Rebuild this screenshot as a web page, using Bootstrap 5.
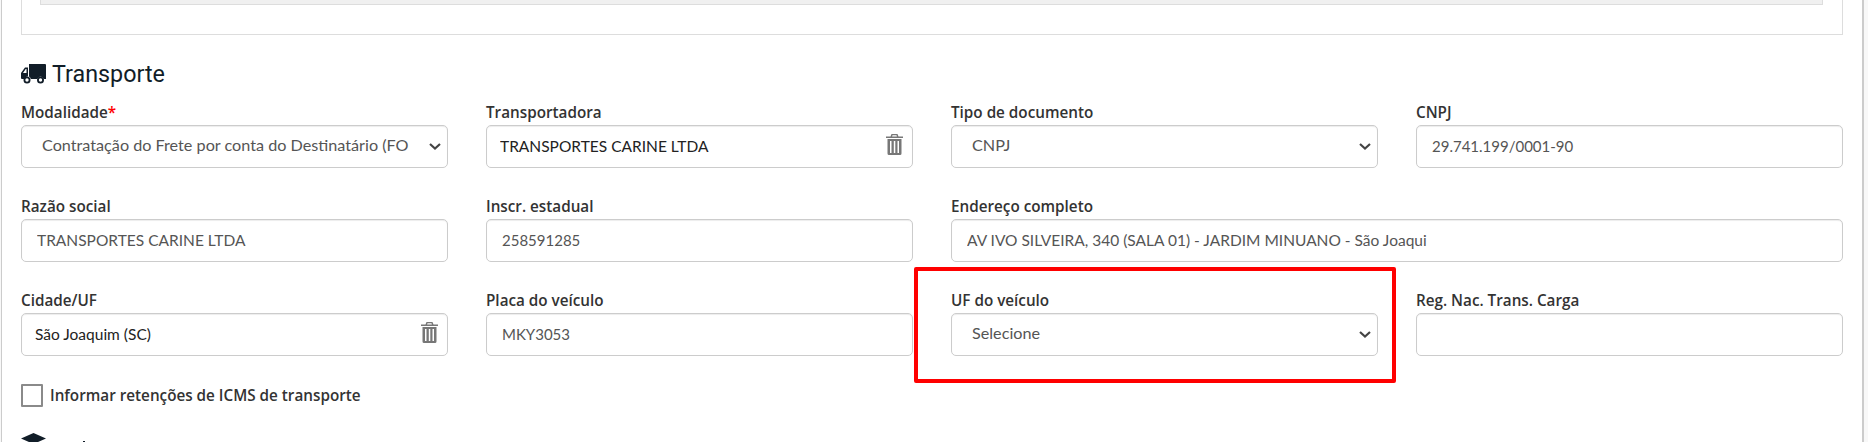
<!DOCTYPE html>
<html lang="pt-BR">
  <head>
    <title>Transporte</title>
    <link href="https://cdn.jsdelivr.net/npm/bootstrap@5.3.2/dist/css/bootstrap.min.css" rel="stylesheet" />
    <script src="https://cdn.jsdelivr.net/npm/bootstrap@5.3.2/dist/js/bootstrap.bundle.min.js"></script>
<style>
  html, body{
    height: 442px;
    overflow: hidden;
  }
  body{
    background: #f8f8f8;
    font-family: "Lato", "Liberation Sans", sans-serif;
    color: #333;
  }
  .page-frame{
    margin: 0 4px 0 1px;
    height: 442px;
    overflow: hidden;
    background: #fff;
    border-left: 1px solid #ccc;
    border-right: 2px solid #ccc;
    padding: 0 19px;
  }
  .prev-box{
    height: 35px;
    border: 1px solid #ddd;
    border-top: 0;
    padding: 0 19px 0 18px;
  }
  .prev-fill{
    height: 5px;
    background: #f0f0f0;
    border: 1px solid #ddd;
    border-top: 0;
  }
  .sec-title{
    display: flex;
    align-items: center;
    gap: 6px;
    font-family: "Roboto", sans-serif;
    font-size: 23.3px;
    font-weight: 400;
    line-height: 28px;
    color: #111d28;
    margin: 25px 0 14px;
  }
  .sec-title svg{
    flex: none;
  }
  .form-rows{
    --bs-gutter-x: 38px;
    --bs-gutter-y: 0;
  }
  .field-row{
    height: 94px;
  }
  .field-label{
    display: block;
    font-family: "Open Sans", sans-serif;
    font-size: 15.25px;
    font-weight: 600;
    line-height: 20px;
    margin-bottom: 3px;
    color: #333;
  }
  .req{
    color: #f00;
  }
  .form-control.fld, .form-select.fld{
    height: 43px;
    font-size: 15.5px;
    color: #555;
    border: 1px solid #ccc;
    border-radius: 5px;
    box-shadow: inset 0 1px 1px rgba(0,0,0,.075);
  }
  .form-control.fld{
    padding: 0 14px 2px 15px;
  }
  .form-select.fld{
    font-size: 16.2px;
    padding: 0 38px 2px 20px;
    background-image: url("data:image/svg+xml,%3csvg xmlns='http://www.w3.org/2000/svg' viewBox='0 0 12 7'%3e%3cpath fill='none' stroke='%23444' stroke-width='2.200' d='M1 1l5 4.500L11 1'/%3e%3c/svg%3e");
    background-position: right 6px center;
    background-size: 12px 7px;
  }
  .form-control.dark-val{
    color: #222;
    padding-left: 13px;
  }
  .form-control.num-val{
    font-size: 15px;
  }
  .fld-wrap{
    position: relative;
  }
  .trash-ic{
    position: absolute;
    top: 9px;
    right: 10px;
  }
  .mark-box{
    position: absolute;
    top: -23px;
    left: -18px;
    width: 482px;
    height: 116px;
    border: 4px solid #f00;
    border-radius: 2px;
    pointer-events: none;
  }
  .mark-host{
    position: relative;
  }
  .check-line{
    display: flex;
    align-items: center;
    gap: 7px;
    height: 23px;
  }
  .check-square{
    appearance: none;
    width: 22px;
    height: 23px;
    border: 2px solid #8a8a8a;
    border-radius: 1px;
    background: #fff;
    flex: none;
    margin: 0;
  }
  .check-text{
    font-family: "Open Sans", sans-serif;
    font-size: 15.25px;
    font-weight: 600;
    color: #333;
    margin: 0;
  }
  .next-title{
    align-items: flex-start;
    margin-top: 26px;
  }
  .next-dot{
    width: 2px;
    height: 2px;
    margin: 8px 0 0 31px;
    background: #111d28;
  }
</style>
  </head>
  <body>
    <div class="page-frame">
      <div class="prev-box"><div class="prev-fill"></div></div>

      <h4 class="sec-title">
        <svg width="25" height="20" viewBox="0 0 25 20"><path fill="#111d28" d="M8 0h16a1 1 0 0 1 1 1v14h-2.200a3.400 3.400 0 0 0-6.600 0H9.800a3.400 3.400 0 0 0-1.800-2.400V0zM7 3.500v9a3.400 3.400 0 0 0-3.800 2.500H1a1 1 0 0 1-1-1V9l4-5.500h3zM5.500 5h-.8L2 9h3.500V5z"/><circle cx="6" cy="16" r="2.600" fill="none" stroke="#111d28" stroke-width="1.800"/><circle cx="19.500" cy="16" r="2.600" fill="none" stroke="#111d28" stroke-width="1.800"/></svg>
        <span>Transporte</span>
      </h4>

      <div class="row form-rows field-row">
        <div class="col-3">
          <label class="field-label">Modalidade<span class="req">*</span></label>
          <select class="form-select fld"><option>Contratação do Frete por conta do Destinatário (FOB)</option></select>
        </div>
        <div class="col-3">
          <label class="field-label">Transportadora</label>
          <div class="fld-wrap">
            <input class="form-control fld dark-val" value="TRANSPORTES CARINE LTDA">
            <svg class="trash-ic" width="17" height="21" viewBox="0 0 17 21"><path fill="#777" d="M5.500 0h6l1 2.500H17V4H0V2.500h4.500L5.500 0zm1 1.300-.4 1.200h4.800l-.4-1.200h-4zM1.500 5h14v14.500a1.500 1.500 0 0 1-1.500 1.500H3a1.500 1.500 0 0 1-1.500-1.500V5zm2.500 2v12h1.500V7H4zm3.800 0v12h1.500V7H7.800zm3.700 0v12H13V7h-1.500z"/></svg>
          </div>
        </div>
        <div class="col-3">
          <label class="field-label">Tipo de documento</label>
          <select class="form-select fld"><option>CNPJ</option></select>
        </div>
        <div class="col-3">
          <label class="field-label">CNPJ</label>
          <input class="form-control fld num-val" value="29.741.199/0001-90">
        </div>
      </div>

      <div class="row form-rows field-row">
        <div class="col-3">
          <label class="field-label">Razão social</label>
          <input class="form-control fld" value="TRANSPORTES CARINE LTDA">
        </div>
        <div class="col-3">
          <label class="field-label">Inscr. estadual</label>
          <input class="form-control fld num-val" value="258591285">
        </div>
        <div class="col-6">
          <label class="field-label">Endereço completo</label>
          <input class="form-control fld" value="AV IVO SILVEIRA, 340 (SALA 01) - JARDIM MINUANO - São Joaqui">
        </div>
      </div>

      <div class="row form-rows field-row">
        <div class="col-3">
          <label class="field-label">Cidade/UF</label>
          <div class="fld-wrap">
            <input class="form-control fld dark-val" value="São Joaquim (SC)">
            <svg class="trash-ic" width="17" height="21" viewBox="0 0 17 21"><path fill="#777" d="M5.500 0h6l1 2.500H17V4H0V2.500h4.500L5.500 0zm1 1.300-.4 1.200h4.800l-.4-1.200h-4zM1.500 5h14v14.500a1.500 1.500 0 0 1-1.500 1.500H3a1.500 1.500 0 0 1-1.500-1.500V5zm2.500 2v12h1.500V7H4zm3.800 0v12h1.500V7H7.800zm3.700 0v12H13V7h-1.500z"/></svg>
          </div>
        </div>
        <div class="col-3">
          <label class="field-label">Placa do veículo</label>
          <input class="form-control fld num-val" value="MKY3053">
        </div>
        <div class="col-3 mark-host">
          <label class="field-label">UF do veículo</label>
          <select class="form-select fld"><option>Selecione</option></select>
          <div class="mark-box"></div>
        </div>
        <div class="col-3">
          <label class="field-label">Reg. Nac. Trans. Carga</label>
          <input class="form-control fld" value="">
        </div>
      </div>

      <div class="check-line">
        <input class="check-square" type="checkbox" id="ret">
        <label class="check-text" for="ret">Informar retenções de ICMS de transporte</label>
      </div>

      <div class="sec-title next-title">
        <svg width="25" height="20" viewBox="0 0 25 20"><path fill="#111d28" d="M12.500 0 25 5.500 12.500 11 0 5.500 12.500 0zM5 10.500l7.500 3.300 7.500-3.300V16c-2 2-5 3-7.500 3S7 18 5 16v-5.500z"/></svg>
        <span class="next-dot"></span>
      </div>
    </div>
  </body>
</html>
